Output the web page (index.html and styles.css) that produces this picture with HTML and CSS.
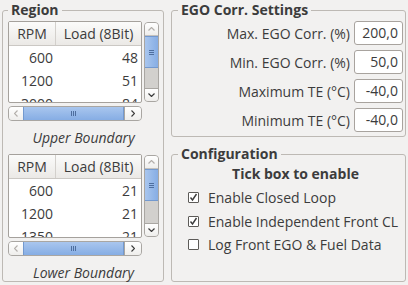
FILE: index.html
```html
<!DOCTYPE html>
<html lang="en">
<head>
  <meta charset="UTF-8" />
  <title>EGO Settings</title>
  <link rel="stylesheet" href="styles.css">
</head>
<body>
  <div class="window">

    <fieldset class="group region">
      <legend>Region</legend>

      <div class="view">
        <div class="table">
          <div class="thead"><span class="c1">RPM</span><span class="c2">Load (8Bit)</span></div>
          <div class="row"><span class="c1">600</span><span class="c2">48</span></div>
          <div class="row"><span class="c1">1200</span><span class="c2">51</span></div>
          <div class="row"><span class="c1">3000</span><span class="c2">84</span></div>
        </div>
        <div class="vscroll">
          <span class="arrow off"><svg width="7" height="4" viewBox="0 0 7 4"><path d="M0.5 3.5 L3.5 0.5 L6.5 3.5" /></svg></span>
          <span class="thumb"><svg width="5" height="5" viewBox="0 0 5 5"><path d="M0 0.5H5M0 2.5H5M0 4.5H5" /></svg></span>
          <span class="trough"></span>
          <span class="arrow"><svg width="7" height="4" viewBox="0 0 7 4"><path d="M0.5 0.5 L3.5 3.5 L6.5 0.5" /></svg></span>
        </div>
        <div class="hscroll">
          <span class="arrow off"><svg width="4" height="7" viewBox="0 0 4 7"><path d="M3.5 0.5 L0.5 3.5 L3.5 6.5" /></svg></span>
          <span class="thumb"><svg width="5" height="5" viewBox="0 0 5 5"><path d="M0.5 0V5M2.5 0V5M4.5 0V5" /></svg></span>
          <span class="arrow end"><svg width="4" height="7" viewBox="0 0 4 7"><path d="M0.5 0.5 L3.5 3.5 L0.5 6.5" /></svg></span>
        </div>
      </div>
      <p class="caption first">Upper Boundary</p>

      <div class="view lower">
        <div class="table">
          <div class="thead"><span class="c1">RPM</span><span class="c2">Load (8Bit)</span></div>
          <div class="row"><span class="c1">600</span><span class="c2">21</span></div>
          <div class="row"><span class="c1">1200</span><span class="c2">21</span></div>
          <div class="row"><span class="c1">1350</span><span class="c2">21</span></div>
        </div>
        <div class="vscroll">
          <span class="arrow off"><svg width="7" height="4" viewBox="0 0 7 4"><path d="M0.5 3.5 L3.5 0.5 L6.5 3.5" /></svg></span>
          <span class="thumb"><svg width="5" height="5" viewBox="0 0 5 5"><path d="M0 0.5H5M0 2.5H5M0 4.5H5" /></svg></span>
          <span class="trough"></span>
          <span class="arrow"><svg width="7" height="4" viewBox="0 0 7 4"><path d="M0.5 0.5 L3.5 3.5 L6.5 0.5" /></svg></span>
        </div>
        <div class="hscroll">
          <span class="arrow off"><svg width="4" height="7" viewBox="0 0 4 7"><path d="M3.5 0.5 L0.5 3.5 L3.5 6.5" /></svg></span>
          <span class="thumb"><svg width="5" height="5" viewBox="0 0 5 5"><path d="M0.5 0V5M2.5 0V5M4.5 0V5" /></svg></span>
          <span class="arrow end"><svg width="4" height="7" viewBox="0 0 4 7"><path d="M0.5 0.5 L3.5 3.5 L0.5 6.5" /></svg></span>
        </div>
      </div>
      <p class="caption">Lower Boundary</p>
    </fieldset>

    <div class="side">
      <fieldset class="group ego">
        <legend>EGO Corr. Settings</legend>
        <div class="field"><label>Max. EGO Corr. (%)</label><span class="input">200,0</span></div>
        <div class="field"><label>Min. EGO Corr. (%)</label><span class="input">50,0</span></div>
        <div class="field"><label>Maximum TE (°C)</label><span class="input">-40,0</span></div>
        <div class="field"><label>Minimum TE (°C)</label><span class="input">-40,0</span></div>
      </fieldset>

      <fieldset class="group config">
        <legend>Configuration</legend>
        <div class="hint">Tick box to enable</div>
        <div class="check"><span class="box"><svg width="9" height="9" viewBox="0 0 9 9"><path d="M1.5 4.5 L3.5 7 L7.5 1" /></svg></span>Enable Closed Loop</div>
        <div class="check"><span class="box"><svg width="9" height="9" viewBox="0 0 9 9"><path d="M1.5 4.5 L3.5 7 L7.5 1" /></svg></span>Enable Independent Front CL</div>
        <div class="check"><span class="box"></span>Log Front EGO &amp; Fuel Data</div>
      </fieldset>
    </div>

  </div>
</body>
</html>
```

FILE: styles.css
```css
* {
  box-sizing: border-box;
}
body {
  margin: 0;
  width: 408px;
  height: 285px;
  background: #f2f1f0;
  color: #3c3c3c;
  font-family: "Open Sans", "Noto Sans", sans-serif;
  font-size: 14px;
  overflow: hidden;
}
.window {
  display: flex;
  gap: 7px;
  padding: 2px 0 0 2px;
}

/* group boxes */
.group {
  margin: 0;
  border: 1px solid #bdb9b4;
  border-radius: 3px;
  min-width: 0;
}
.group legend {
  font-weight: bold;
  line-height: 16px;
  padding: 0 3px 0 3px;
  margin-left: 6px;
}
.region {
  width: 162px;
  height: 280px;
  padding: 3px 4px 0 5px;
}
.region legend {
  margin-left: 0;
}
.side {
  display: flex;
  flex-direction: column;
  gap: 9px;
  width: 235px;
}
.ego {
  height: 135px;
  padding: 3px 2px 0 0;
  display: flex;
  flex-direction: column;
  gap: 5px;
}
.config {
  height: 136px;
  padding: 2px 0 0 0;
}

/* table views */
.view {
  display: grid;
  grid-template-columns: 134px 15px;
  column-gap: 2px;
  row-gap: 3px;
}
.table {
  height: 82px;
  overflow: hidden;
  background: #fff;
  border: 1px solid #a5a19c;
  border-radius: 2px;
}
.lower .table {
  height: 84px;
}
.thead {
  display: flex;
  height: 24px;
  line-height: 23px;
  background: linear-gradient(#fbfbfa, #ebe9e6);
  border-bottom: 1px solid #cbc8c4;
}
.thead .c1 {
  width: 47px;
  text-align: center;
  border-right: 1px solid #d3d0cc;
}
.thead .c2 {
  flex: 1;
  text-align: center;
}
.row {
  display: flex;
  height: 23px;
  line-height: 23px;
}
.row .c1 {
  width: 47px;
  text-align: right;
  padding-right: 3px;
}
.row .c2 {
  flex: 1;
  text-align: right;
  padding-right: 3px;
}

/* scroll bars */
.vscroll,
.hscroll {
  display: flex;
  border: 1px solid #a9a6a2;
  border-radius: 4px;
  overflow: hidden;
  background: #d2d0cd;
}
.vscroll {
  flex-direction: column;
  margin: 1px 0;
}
.hscroll {
  height: 15px;
}
.arrow {
  display: flex;
  align-items: center;
  justify-content: center;
  background: linear-gradient(#ffffff, #efeeec);
}
.vscroll .arrow {
  height: 13px;
}
.hscroll .arrow {
  width: 14px;
}
.hscroll .arrow.end {
  width: 17px;
  border-left: 1px solid #a9a6a2;
}
.vscroll .arrow:first-child {
  border-bottom: 1px solid #c4c1bd;
}
.vscroll .arrow:last-child {
  border-top: 1px solid #a9a6a2;
}
.arrow svg path {
  fill: none;
  stroke: #3c3c3c;
  stroke-width: 1.2;
}
.arrow.off svg path {
  stroke: #b3afab;
}
.thumb {
  display: flex;
  align-items: center;
  justify-content: center;
  border: 1px solid #7399cf;
  background: linear-gradient(90deg, #a9c6ee, #86ade4);
}
.vscroll .thumb {
  height: 32px;
  margin: 0 -1px;
}
.hscroll .thumb {
  width: 103px;
  margin: -1px 0;
  background: linear-gradient(#a9c6ee, #86ade4);
}
.thumb svg path {
  stroke: #4e6e9e;
  stroke-width: 1;
}
.trough {
  flex: 1;
}

.caption {
  margin: 0;
  padding-top: 8px;
  line-height: 17px;
  text-align: center;
  font-style: italic;
}
.caption.first {
  height: 33px;
}

/* ego fields */
.field {
  display: flex;
  justify-content: flex-end;
  align-items: center;
  gap: 4px;
  height: 24px;
}
.input {
  width: 49px;
  height: 24px;
  line-height: 22px;
  text-align: right;
  padding-right: 4px;
  background: #fff;
  border: 1px solid #a8a39e;
  border-radius: 3px;
}

/* configuration */
.hint {
  font-weight: bold;
  line-height: 20px;
  text-align: center;
  padding-left: 14px;
  margin-bottom: 2px;
}
.check {
  display: flex;
  align-items: center;
  gap: 9px;
  height: 23.5px;
  padding-left: 16px;
}
.box {
  display: flex;
  align-items: center;
  justify-content: center;
  width: 11px;
  height: 11px;
  background: #fff;
  border: 1px solid #5d5b58;
  border-radius: 1px;
}
.box svg path {
  fill: none;
  stroke: #3c3c3c;
  stroke-width: 1.4;
}
```
